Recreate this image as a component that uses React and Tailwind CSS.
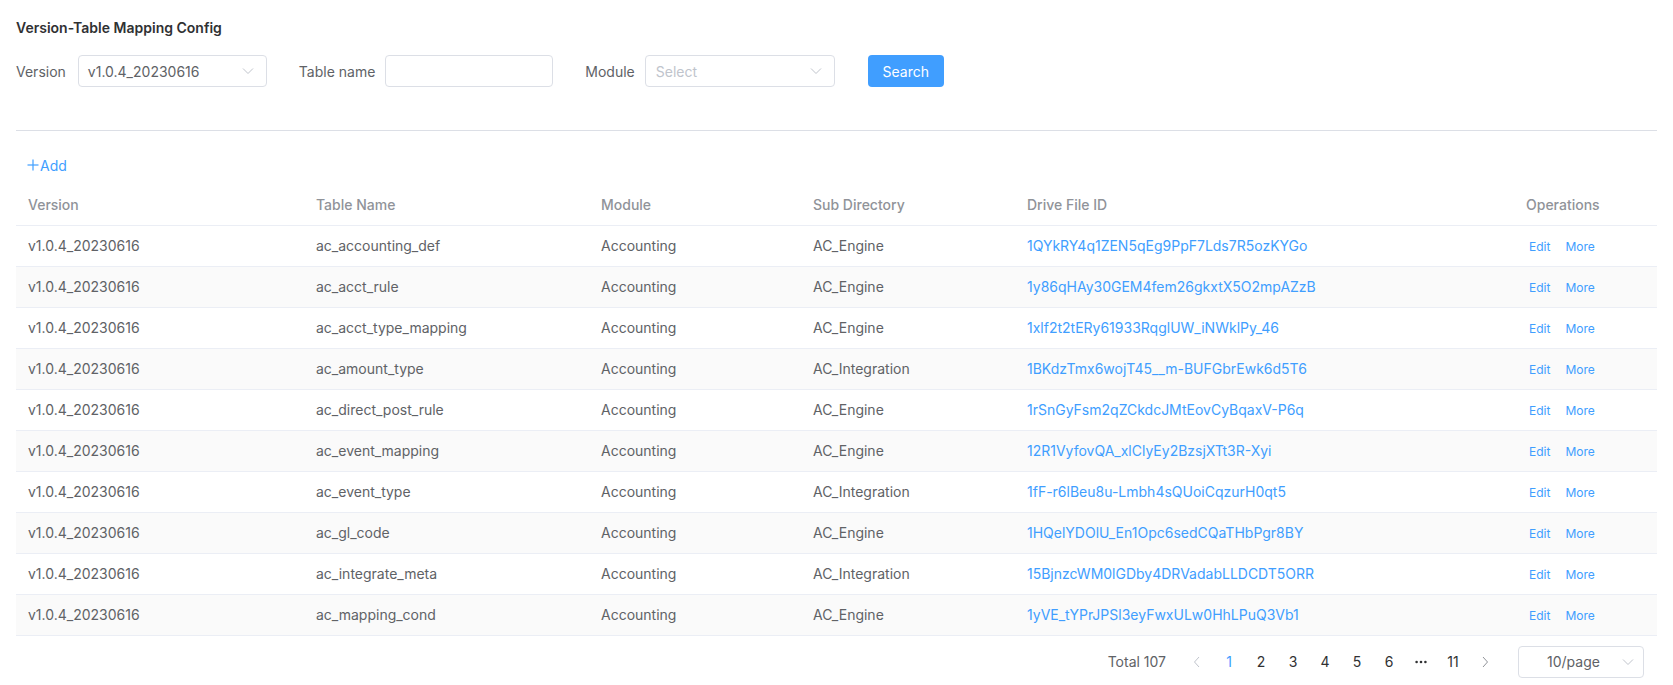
import React from "react";

const rows = [
  ["ac_accounting_def", "AC_Engine", "1QYkRY4q1ZEN5qEg9PpF7Lds7R5ozKYGo"],
  ["ac_acct_rule", "AC_Engine", "1y86qHAy30GEM4fem26gkxtX5O2mpAZzB"],
  ["ac_acct_type_mapping", "AC_Engine", "1xlf2t2tERy61933RqglUW_iNWklPy_46"],
  ["ac_amount_type", "AC_Integration", "1BKdzTmx6wojT45__m-BUFGbrEwk6d5T6"],
  ["ac_direct_post_rule", "AC_Engine", "1rSnGyFsm2qZCkdcJMtEovCyBqaxV-P6q"],
  ["ac_event_mapping", "AC_Engine", "12R1VyfovQA_xlClyEy2BzsjXTt3R-Xyi"],
  ["ac_event_type", "AC_Integration", "1fF-r6lBeu8u-Lmbh4sQUoiCqzurH0qt5"],
  ["ac_gl_code", "AC_Engine", "1HQelYDOlU_En1Opc6sedCQaTHbPgr8BY"],
  ["ac_integrate_meta", "AC_Integration", "15BjnzcWM0lGDby4DRVadabLLDCDT5ORR"],
  ["ac_mapping_cond", "AC_Engine", "1yVE_tYPrJPSl3eyFwxULw0HhLPuQ3Vb1"],
];

function ChevronDown() {
  return (
    <svg width="12" height="8" viewBox="0 0 12 8" fill="none">
      <polyline points="1,1.5 6,6.5 11,1.5" stroke="#C0C4CC" strokeWidth="1" />
    </svg>
  );
}

function Chevron({ dir, color }) {
  return (
    <svg width="8" height="12" viewBox="0 0 8 12" fill="none">
      {dir === "left" ? (
        <polyline points="6,1 1.5,6 6,11" stroke={color} strokeWidth="1" />
      ) : (
        <polyline points="2,1 6.5,6 2,11" stroke={color} strokeWidth="1" />
      )}
    </svg>
  );
}

export default function App() {
  return (
    <div className="min-h-[685px] bg-white px-4 pt-[18px] font-['Inter','Liberation_Sans',sans-serif] text-[14px] text-[#606266]">
      <h1 className="text-[14px] font-semibold leading-5 text-[#303133]">
        Version-Table Mapping Config
      </h1>

      <div className="mt-[17px] flex h-8 items-center">
        <span className="mr-3">Version</span>
        <div className="flex h-8 w-[189px] items-center justify-between rounded-[4px] border border-[#DCDFE6] pl-[9px] pr-[12px]">
          <span className="text-[#606266]">v1.0.4_20230616</span>
          <ChevronDown />
        </div>
        <span className="ml-[32px] mr-[10px]">Table name</span>
        <div className="h-8 w-[168px] rounded-[4px] border border-[#DCDFE6]" />
        <span className="ml-[32px] mr-[10px]">Module</span>
        <div className="flex h-8 w-[190px] items-center justify-between rounded-[4px] border border-[#DCDFE6] pl-[10px] pr-[12px]">
          <span className="text-[#C0C4CC]">Select</span>
          <ChevronDown />
        </div>
        <button className="ml-[33px] flex h-8 w-[76px] items-center justify-center rounded-[4px] bg-[#409EFF] text-white">
          Search
        </button>
      </div>

      <div className="mt-[43px] h-px bg-[#DCDFE6]" />

      <div className="mt-[24px] flex h-5 items-center pl-[11px] text-[#409EFF]">
        <svg width="12" height="12" viewBox="0 0 12 12" fill="none" className="mr-[1px]">
          <line x1="6" y1="0.5" x2="6" y2="11.5" stroke="#409EFF" strokeWidth="1.2" />
          <line x1="0.5" y1="6" x2="11.5" y2="6" stroke="#409EFF" strokeWidth="1.2" />
        </svg>
        <span>Add</span>
      </div>

      <table className="mt-[9px] w-full table-fixed border-collapse">
        <colgroup>
          <col className="w-[288px]" />
          <col className="w-[285px]" />
          <col className="w-[212px]" />
          <col className="w-[214px]" />
          <col className="w-[499px]" />
          <col />
        </colgroup>
        <thead>
          <tr className="h-[41px] border-b border-[#EBEEF5] text-left">
            <th className="px-3 font-medium text-[#909399]">Version</th>
            <th className="px-3 font-medium text-[#909399]">Table Name</th>
            <th className="px-3 font-medium text-[#909399]">Module</th>
            <th className="px-3 font-medium text-[#909399]">Sub Directory</th>
            <th className="px-3 font-medium text-[#909399]">Drive File ID</th>
            <th className="px-3 font-medium text-[#909399]">Operations</th>
          </tr>
        </thead>
        <tbody>
          {rows.map((r, i) => (
            <tr
              key={r[0]}
              className={
                "h-[41px] border-b border-[#EBEEF5] " +
                (i % 2 === 1 ? "bg-[#FAFAFA]" : "bg-white")
              }
            >
              <td className="px-3 whitespace-nowrap">v1.0.4_20230616</td>
              <td className="px-3 whitespace-nowrap">{r[0]}</td>
              <td className="px-3 whitespace-nowrap">Accounting</td>
              <td className="px-3 whitespace-nowrap">{r[1]}</td>
              <td className="px-3 whitespace-nowrap text-[#409EFF]">{r[2]}</td>
              <td className="px-3 whitespace-nowrap pt-[2px] text-[12px] text-[#409EFF]">
                <span className="ml-[3px]">Edit</span>
                <span className="ml-[15px]">More</span>
              </td>
            </tr>
          ))}
        </tbody>
      </table>

      <div className="mt-[10px] flex h-8 items-center justify-end pr-[13px]">
        <span className="mr-[15px] text-[#606266]">Total 107</span>
        <div className="flex items-center text-[#303133]">
          <span className="flex h-8 w-8 items-center justify-center">
            <Chevron dir="left" color="#C0C4CC" />
          </span>
          <span className="flex h-8 w-8 items-center justify-center text-[#409EFF]">1</span>
          <span className="flex h-8 w-8 items-center justify-center">2</span>
          <span className="flex h-8 w-8 items-center justify-center">3</span>
          <span className="flex h-8 w-8 items-center justify-center">4</span>
          <span className="flex h-8 w-8 items-center justify-center">5</span>
          <span className="flex h-8 w-8 items-center justify-center">6</span>
          <span className="flex h-8 w-8 items-center justify-center">
            <svg width="12" height="4" viewBox="0 0 12 4">
              <circle cx="1.6" cy="2" r="1.3" fill="#303133" />
              <circle cx="6" cy="2" r="1.3" fill="#303133" />
              <circle cx="10.4" cy="2" r="1.3" fill="#303133" />
            </svg>
          </span>
          <span className="flex h-8 w-8 items-center justify-center">11</span>
          <span className="flex h-8 w-8 items-center justify-center">
            <Chevron dir="right" color="#909399" />
          </span>
        </div>
        <div className="ml-[17px] flex h-8 w-[126px] items-center justify-between rounded-[4px] border border-[#DCDFE6] pl-[28px] pr-[9px]">
          <span className="text-[#606266]">10/page</span>
          <ChevronDown />
        </div>
      </div>
    </div>
  );
}
